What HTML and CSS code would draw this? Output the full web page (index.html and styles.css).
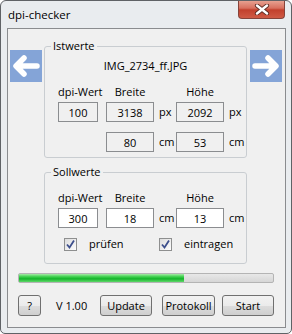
FILE: index.html
```html
<html>
    <head>
        <meta charset="UTF-8" />
        <link rel="stylesheet" href="styles.css">
    </head>
    <body>
        <div class="window">
            <div class="titlebar">
                <span class="title">dpi-checker</span>
                <div class="close">
                    <svg width="16" height="11" viewBox="0 0 16 11">
                        <path d="M3 1.5 L13 9.5 M13 1.5 L3 9.5" stroke="#5b2a22" stroke-width="4.2" stroke-linecap="round" />
                        <path d="M3 1.5 L13 9.5 M13 1.5 L3 9.5" stroke="#ffffff" stroke-width="2.4" stroke-linecap="round" />
                    </svg>
                </div>
            </div>
            <div class="client">
                <div class="top_row">
                    <div class="nav prev">
                        <svg width="32" height="32" viewBox="0 0 32 32">
                            <path d="M27 16 H7 M14 8 L6 16 L14 24" fill="none" stroke="#ffffff" stroke-width="5.5" stroke-linecap="round" stroke-linejoin="round" />
                        </svg>
                    </div>
                    <fieldset class="group ist">
                        <legend>Istwerte</legend>
                        <div class="filename">IMG_2734_ff.JPG</div>
                        <div class="values">
                            <span class="lbl col_dpi">dpi-Wert</span>
                            <span class="lbl col_w">Breite</span>
                            <span class="lbl col_h">Höhe</span>

                            <input class="field col_dpi" type="text" value="100" readonly />
                            <input class="field col_w" type="text" value="3138" readonly />
                            <span class="unit">px</span>
                            <input class="field col_h" type="text" value="2092" readonly />
                            <span class="unit">px</span>

                            <input class="field col_w second" type="text" value="80" readonly />
                            <span class="unit second">cm</span>
                            <input class="field col_h second" type="text" value="53" readonly />
                            <span class="unit second">cm</span>
                        </div>
                    </fieldset>
                    <div class="nav next">
                        <svg width="32" height="32" viewBox="0 0 32 32">
                            <path d="M5 16 H25 M18 8 L26 16 L18 24" fill="none" stroke="#ffffff" stroke-width="5.5" stroke-linecap="round" stroke-linejoin="round" />
                        </svg>
                    </div>
                </div>

                <fieldset class="group soll">
                    <legend>Sollwerte</legend>
                    <div class="values">
                        <span class="lbl col_dpi">dpi-Wert</span>
                        <span class="lbl col_w">Breite</span>
                        <span class="lbl col_h">Höhe</span>

                        <input class="field edit col_dpi" type="text" value="300" />
                        <input class="field edit col_w" type="text" value="18" />
                        <span class="unit">cm</span>
                        <input class="field edit col_h" type="text" value="13" />
                        <span class="unit">cm</span>
                    </div>
                    <div class="checks">
                        <label class="check first">
                            <span class="box">
                                <svg width="11" height="11" viewBox="0 0 11 11">
                                    <path d="M2 5.5 L4.5 8.5 L9 1.5" fill="none" stroke="#3d4f8c" stroke-width="1.8" />
                                </svg>
                            </span>
                            prüfen
                        </label>
                        <label class="check">
                            <span class="box">
                                <svg width="11" height="11" viewBox="0 0 11 11">
                                    <path d="M2 5.5 L4.5 8.5 L9 1.5" fill="none" stroke="#3d4f8c" stroke-width="1.8" />
                                </svg>
                            </span>
                            eintragen
                        </label>
                    </div>
                </fieldset>

                <div class="progress">
                    <div class="chunk" style="width: 65%"></div>
                </div>

                <div class="buttons">
                    <button class="btn help">?</button>
                    <span class="version">V 1.00</span>
                    <button class="btn update">Update</button>
                    <button class="btn protokoll">Protokoll</button>
                    <button class="btn start">Start</button>
                </div>
            </div>
        </div>
    </body>
</html>
```

FILE: styles.css
```css
* {
    box-sizing: border-box;
}
body {
    margin: 0;
    font-family: "Open Sans", "Noto Sans", sans-serif;
    font-size: 11px;
    color: #000;
}

.window {
    width: 292px;
    height: 334px;
    border: 1px solid #5f6266;
    border-radius: 6px 6px 5px 5px;
    background: #e9ecef;
    overflow: hidden;
}

.titlebar {
    height: 27px;
    display: flex;
    justify-content: space-between;
    align-items: flex-start;
}
.title {
    padding: 6px 0 0 7px;
    line-height: 16px;
    font-size: 11.5px;
}
.close {
    width: 47px;
    height: 19px;
    margin: -1px 6px 0 0;
    border: 1px solid #86433a;
    border-top: none;
    border-radius: 0 0 4px 4px;
    background: linear-gradient(#e9a797 0%, #d8705f 45%, #c2402d 55%, #cf5a45 100%);
    display: flex;
    align-items: center;
    justify-content: center;
}

.client {
    height: 300px;
    margin: 0 5px 0 6px;
    border: 1px solid #8a8c8f;
    background: #f0f0f0;
}

.top_row {
    display: flex;
    align-items: flex-start;
    margin-top: 10px;
}
.nav {
    width: 32px;
    height: 32px;
    margin-top: 11px;
    background: #84a4d7;
}
.nav svg {
    display: block;
}
.prev {
    margin: 11px 2px 0 2px;
}
.next {
    margin-left: 3px;
}

.group {
    width: 203px;
    margin: 0;
    padding: 0 0 5px 0;
    border: 1px solid #c9cdd1;
    border-radius: 3px;
}
.group legend {
    margin-left: 6px;
    padding: 0 2px;
    line-height: 14px;
}
.soll {
    margin: 7px 0 0 36px;
    padding: 11px 0 12px 0;
}

.filename {
    margin-top: 5px;
    line-height: 16px;
    text-align: center;
}

.values {
    display: grid;
    grid-template-columns: 40px 8px 48px 22px 48px 22px;
    margin: 10px 0 0 13px;
}
.soll .values {
    margin-top: 0;
}
.lbl {
    line-height: 16px;
    margin-bottom: 2px;
    text-align: center;
    white-space: nowrap;
}
.col_dpi {
    grid-column: 1;
}
.col_w {
    grid-column: 3;
}
.col_h {
    grid-column: 5;
}
.field {
    width: 100%;
    height: 20px;
    margin: 0;
    padding: 0;
    border: 1px solid #8b8d90;
    background: #f0f0f0;
    font: inherit;
    text-align: center;
    outline: none;
}
.field.edit {
    background: #fff;
}
.unit {
    padding-left: 5px;
    line-height: 20px;
}
.second {
    margin-top: 10px;
}

.checks {
    display: flex;
    margin: 9px 0 0 19px;
    height: 14px;
}
.check {
    display: flex;
    align-items: center;
    gap: 12px;
    line-height: 14px;
}
.check.first {
    width: 95px;
}
.box {
    width: 13px;
    height: 13px;
    border: 1px solid #8e8f8f;
    background: linear-gradient(135deg, #dcdcdc, #fdfdfd);
    display: flex;
    align-items: center;
    justify-content: center;
}
.box svg {
    display: block;
}

.progress {
    width: 256px;
    height: 10px;
    margin: 9px 0 0 10px;
    border: 1px solid #b4b4b4;
    border-radius: 2px;
    background: linear-gradient(#e8e8e8, #d6d6d6);
}
.chunk {
    height: 100%;
    background: linear-gradient(#a6eba6 0%, #3ccf4c 35%, #16b42b 60%, #5fd86a 100%);
}

.buttons {
    display: flex;
    align-items: center;
    margin: 12px 0 0 10px;
    height: 21px;
}
.btn {
    height: 21px;
    margin: 0;
    padding: 0;
    border: 1px solid #707070;
    border-radius: 3px;
    background: linear-gradient(#f2f2f2 0%, #ebebeb 50%, #dddddd 51%, #cfcfcf 100%);
    font: inherit;
    color: #000;
}
.help {
    width: 23px;
}
.version {
    width: 59px;
    padding-left: 15px;
}
.update {
    width: 52px;
}
.protokoll {
    width: 53px;
    margin-left: 10px;
}
.start {
    width: 52px;
    margin-left: 7px;
}
```
